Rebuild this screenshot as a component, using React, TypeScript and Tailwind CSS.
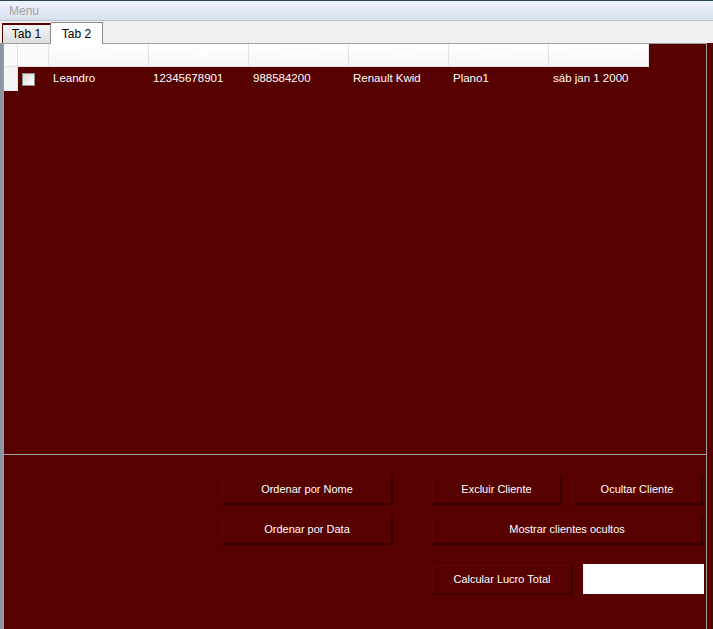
import React from "react";

const columns = ["Nome", "CPF", "Telefone", "Carro", "Plano", "Nascimento"];
const row = ["Leandro", "12345678901", "988584200", "Renault Kwid", "Plano1", "sáb jan 1 2000"];

function Btn({ label, className }: { label: string; className: string }) {
  return (
    <button
      className={`h-[30px] bg-[#560000] text-white text-[11px] border-t border-l border-[#5e0505] border-r-2 border-b-2 border-r-[#3a0000] border-b-[#3a0000] flex items-center justify-center ${className}`}
    >
      {label}
    </button>
  );
}

export default function App() {
  return (
    <div
      className="w-[713px] h-[629px] bg-[#560000] flex flex-col overflow-hidden"
      style={{ fontFamily: '"Liberation Sans", Arial, sans-serif' }}
    >
      <div className="h-px bg-[#2b4456]" />
      {/* menu */}
      <div className="h-[20px] bg-gradient-to-b from-[#eef3fa] to-[#d8e2f0] flex items-center pl-[9px] text-[12px] text-[#a3a3a3] border-b border-[#b9c3cf]">
        Menu
      </div>
      {/* tab strip */}
      <div className="h-[22px] bg-[#f0f0f0] flex items-end pl-[2px]">
        <div className="w-[49px] h-[20px] border-t-2 border-t-[#5a0000] border-l border-l-[#5a0000] border-r border-[#8c8c8c] bg-gradient-to-b from-[#f4f4f4] to-[#dedede] text-[12px] text-black flex items-center justify-center">
          Tab 1
        </div>
        <div className="w-[52px] h-[22px] border-t border-r border-[#8c8c8c] bg-white text-[12px] text-black flex items-center justify-center -mb-px relative z-10">
          Tab 2
        </div>
      </div>
      <div className="flex-1 flex">
        <div className="w-[3px] bg-[#8a97a3]" />
        <div className="w-[704px] border-l border-r border-t border-[#a0a0a0] flex flex-col">
          {/* grid */}
          <div className="h-[411px] border-b border-[#a8a8a8]">
            <div className="flex h-[23px]">
              <div className="w-[14px] bg-[#fafafa] border-r border-b border-[#e3e3e3]" />
              <div className="w-[31px] bg-[#fafafa] border-r border-b border-[#e3e3e3]" />
              {columns.map((c) => (
                <div
                  key={c}
                  className="w-[100px] bg-gradient-to-b from-white to-[#f6f6f6] border-r border-b border-[#e3e3e3] text-white text-[11px] flex items-center justify-center"
                >
                  {c}
                </div>
              ))}
            </div>
            <div className="flex h-[24px]">
              <div className="w-[14px] bg-[#f4f4f4] border-r border-[#e3e3e3]" />
              <div className="w-[31px] flex items-center pl-[4px]">
                <div className="w-[13px] h-[13px] border border-[#8e8f8f] bg-gradient-to-br from-[#dcdcdc] to-white" />
              </div>
              {row.map((v) => (
                <div key={v} className="w-[100px] text-white text-[11.5px] flex items-center pl-[4px]">
                  {v}
                </div>
              ))}
            </div>
          </div>
          {/* buttons */}
          <div className="pt-[20px] pl-[218px] flex flex-col">
            <div className="flex">
              <Btn label="Ordenar por Nome" className="w-[171px]" />
              <div className="w-[39px]" />
              <Btn label="Excluir Cliente" className="w-[130px]" />
              <div className="w-[10px]" />
              <Btn label="Ocultar Cliente" className="w-[131px]" />
            </div>
            <div className="flex mt-[10px]">
              <Btn label="Ordenar por Data" className="w-[171px]" />
              <div className="w-[39px]" />
              <Btn label="Mostrar clientes ocultos" className="w-[271px]" />
            </div>
            <div className="flex mt-[20px] items-start">
              <div className="w-[210px]" />
              <Btn label="Calcular Lucro Total" className="w-[141px]" />
              <div className="w-[10px]" />
              <div className="w-[121px] h-[30px] bg-white -mt-px" />
            </div>
          </div>
        </div>
      </div>
    </div>
  );
}
